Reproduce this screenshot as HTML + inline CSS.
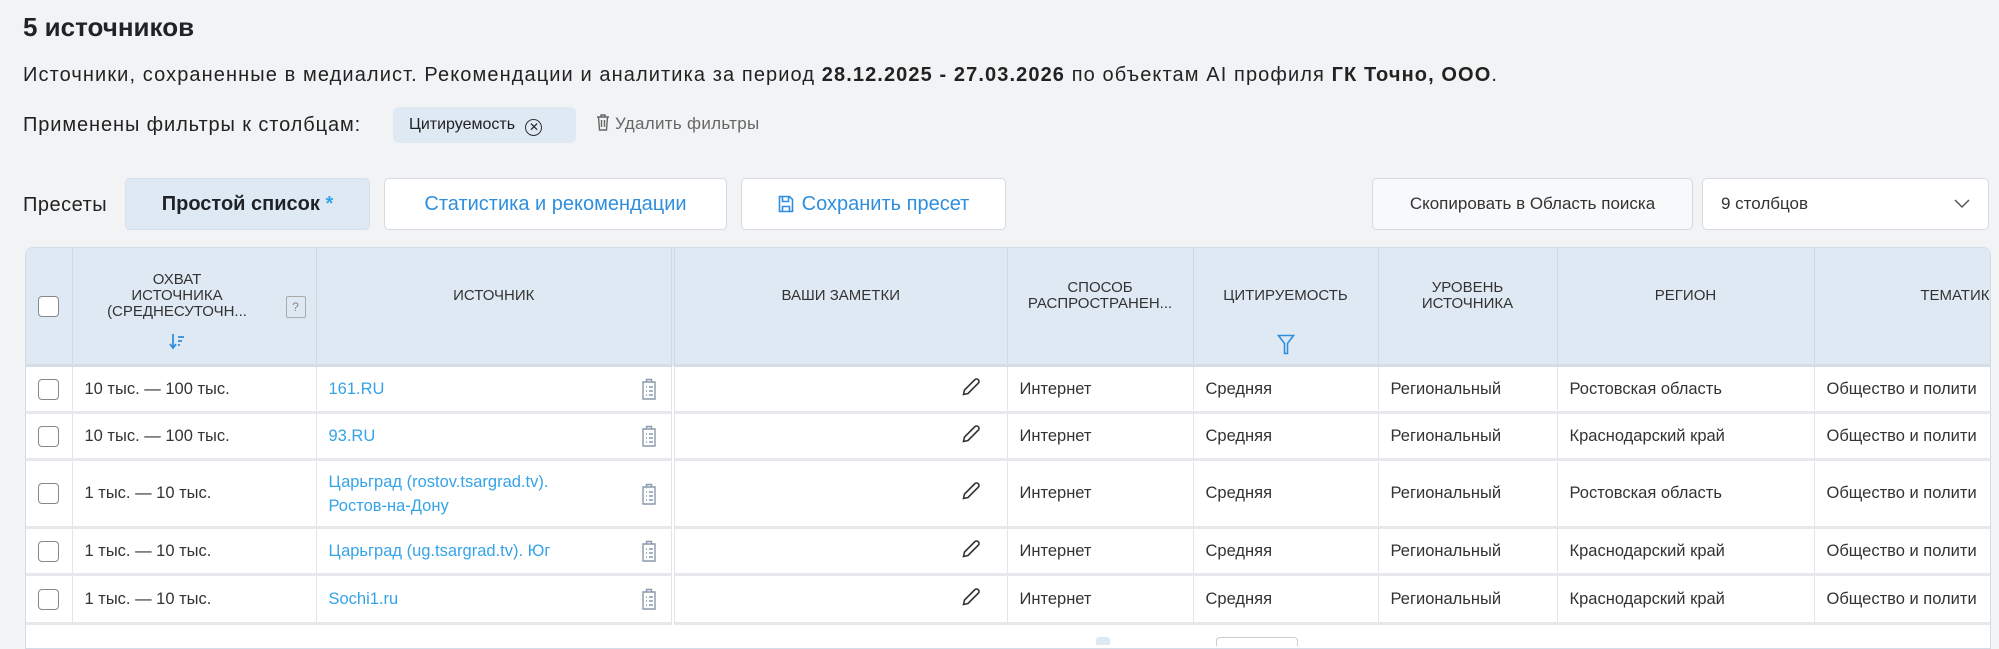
<!DOCTYPE html>
<html><head><meta charset="utf-8"><style>
body{margin:0;width:1999px;height:642px;overflow:hidden;background:#f1f3f5;font-family:"Liberation Sans",sans-serif;color:#222;position:relative}
.a{position:absolute;white-space:nowrap}
h1{position:absolute;left:23px;top:12px;margin:0;font-size:26px;font-weight:bold;color:#1f2328}
.btn{position:absolute;top:178px;height:52px;box-sizing:border-box;border:1px solid #d5dae0;background:#fff;border-radius:5px;display:flex;align-items:center;justify-content:center;font-size:20px;color:#2f8fde}
.tbl{position:absolute;left:25px;top:247px;width:1964px;height:400px;background:#fff;border:1px solid #d3dde8;border-radius:8px 8px 0 0;overflow:hidden}
table{border-collapse:collapse;table-layout:fixed;font-size:16.5px;width:1964px}
th{background:#dfe9f3;font-weight:normal;font-size:15px;color:#333;text-transform:uppercase;line-height:16px;height:116px;vertical-align:top;padding:0 6px;border-right:1px solid #cfd9e4;border-bottom:3px solid #d6dde5}
th .h{height:116px;box-sizing:border-box;padding-top:40px;position:relative}
td{border-right:1px solid #e2e5e9;border-bottom:3px solid #e6e8eb;padding:0 12px;color:#333;white-space:nowrap;overflow:hidden}
td.l{color:#35a3e8;white-space:normal;line-height:24px;position:relative}
.cb{width:19px;height:19px;border:1.5px solid #888;border-radius:4px;background:#fff;margin:auto}
.clip{position:absolute;right:14px;top:50%;margin-top:-11px}
.w{font-size:20px;letter-spacing:1.1px}
td.p{text-align:right;padding-right:26px}
</style></head><body>
<h1>5 источников</h1>
<div class="a w" style="left:23px;top:64px">Источники, сохраненные в медиалист. Рекомендации и аналитика за период <b>28.12.2025 - 27.03.2026</b> по объектам AI профиля <b>ГК Точно, ООО</b>.</div>
<div class="a w" style="left:23px;top:114px;letter-spacing:0.9px">Применены фильтры к столбцам:</div>
<div class="a" style="left:393px;top:107px;width:183px;height:36px;background:#dfe9f3;border-radius:6px;font-size:16px;line-height:36px;padding-left:16px;box-sizing:border-box">Цитируемость <span style="display:inline-block;width:15px;height:15px;border:1.5px solid #333;border-radius:50%;font-size:12px;line-height:15px;text-align:center;vertical-align:-2px;margin-left:6px">✕</span></div>
<div class="a" style="left:596px;top:114px;font-size:17px;color:#666;letter-spacing:0.3px"><svg width="14" height="17" viewBox="0 0 14 17" style="vertical-align:-2px"><path d="M1 3h12M5 3V1h4v2M2.5 3l1 13h7l1-13M5.5 6v7M8.5 6v7" fill="none" stroke="#666" stroke-width="1.4"/></svg> Удалить фильтры</div>
<div class="a w" style="left:23px;top:194px;letter-spacing:0.5px">Пресеты</div>
<div class="btn" style="left:125px;width:245px;background:#dfe9f3;color:#1f2328;font-weight:bold;border-color:#d7e1ec">Простой список&nbsp;<span style="color:#35a3e8">*</span></div>
<div class="btn" style="left:384px;width:343px">Статистика и рекомендации</div>
<div class="btn" style="left:741px;width:265px"><svg width="16" height="18" viewBox="0 0 16 18" style="margin-right:8px"><path d="M1.5 1.5h10l3 3v12h-13z M4.5 1.5v5h6v-5 M4.5 16.5v-5h7v5" fill="none" stroke="#2f8fde" stroke-width="1.6"/></svg>Сохранить пресет</div>
<div class="btn" style="left:1372px;width:321px;font-size:17px;color:#333;background:#f8f9fa">Скопировать в Область поиска</div>
<div class="btn" style="left:1702px;width:287px;font-size:17px;color:#333;justify-content:space-between;padding:0 18px">9 столбцов<svg width="16" height="10"><path d="M1 1l7 7 7-7" fill="none" stroke="#555" stroke-width="1.5"/></svg></div>
<div class="tbl"><table>
<colgroup><col style="width:46px"><col style="width:244px"><col style="width:357px"><col style="width:334px"><col style="width:186px"><col style="width:185px"><col style="width:179px"><col style="width:257px"><col style="width:176px"></colgroup>
<tr><th style="padding:0"><div class="h" style="padding-top:48px"><div class="cb"></div></div></th>
<th style="padding-right:40px"><div class="h" style="padding-top:24px">Охват<br>источника<br>(среднесуточн...<br><svg width="16" height="18" style="margin-top:12px"><path d="M4 2v14M1 12l3 4 3-4M9 5h6M9 9h4M9 13h2" fill="none" stroke="#2f8fde" stroke-width="1.8"/></svg><span style="position:absolute;right:-30px;top:48px;width:18px;height:20px;border:1px solid #aaa;border-radius:2px;font-size:12px;line-height:20px;color:#888">?</span></div></th>
<th style="border-right:4px double #cfd9e4"><div class="h">Источник</div></th><th><div class="h">Ваши заметки</div></th>
<th><div class="h" style="padding-top:32px">Способ<br>распространен...</div></th>
<th><div class="h">Цитируемость<br><svg width="18" height="22" style="margin-top:30px"><path d="M1.5 1.5h15l-6 8v10h-3v-10z" fill="none" stroke="#2f8fde" stroke-width="1.6"/></svg></div></th>
<th><div class="h" style="padding-top:32px">Уровень<br>источника</div></th><th><div class="h">Регион</div></th><th style="text-align:right;padding-right:0"><div class="h">Тематик</div></th></tr>
<tbody>
<tr style="height:47px"><td style="padding:0"><div class="cb"></div></td><td>10 тыс. — 100 тыс.</td><td class="l" style="border-right:4px double #e2e5e9">161.RU<svg class="clip" width="16" height="22"><path d="M2 4h12v17H2zM5.5 4V1.5h5V4M5 9h1M5 13h1M5 17h1M8 9h4M8 13h4M8 17h4" fill="none" stroke="#8a99ab" stroke-width="1.4"/></svg></td><td class="p"><svg width="20" height="20"><path d="M14 2.5a2.5 2.5 0 0 1 3.5 3.5L7 16.5 2.5 17.5 3.5 13z" fill="none" stroke="#333" stroke-width="1.6"/></svg></td><td>Интернет</td><td>Средняя</td><td>Региональный</td><td>Ростовская область</td><td>Общество и полити</td></tr>
<tr style="height:47px"><td style="padding:0"><div class="cb"></div></td><td>10 тыс. — 100 тыс.</td><td class="l" style="border-right:4px double #e2e5e9">93.RU<svg class="clip" width="16" height="22"><path d="M2 4h12v17H2zM5.5 4V1.5h5V4M5 9h1M5 13h1M5 17h1M8 9h4M8 13h4M8 17h4" fill="none" stroke="#8a99ab" stroke-width="1.4"/></svg></td><td class="p"><svg width="20" height="20"><path d="M14 2.5a2.5 2.5 0 0 1 3.5 3.5L7 16.5 2.5 17.5 3.5 13z" fill="none" stroke="#333" stroke-width="1.6"/></svg></td><td>Интернет</td><td>Средняя</td><td>Региональный</td><td>Краснодарский край</td><td>Общество и полити</td></tr>
<tr style="height:68px"><td style="padding:0"><div class="cb"></div></td><td>1 тыс. — 10 тыс.</td><td class="l" style="border-right:4px double #e2e5e9">Царьград (rostov.tsargrad.tv).<br>Ростов-на-Дону<svg class="clip" width="16" height="22"><path d="M2 4h12v17H2zM5.5 4V1.5h5V4M5 9h1M5 13h1M5 17h1M8 9h4M8 13h4M8 17h4" fill="none" stroke="#8a99ab" stroke-width="1.4"/></svg></td><td class="p"><svg width="20" height="20"><path d="M14 2.5a2.5 2.5 0 0 1 3.5 3.5L7 16.5 2.5 17.5 3.5 13z" fill="none" stroke="#333" stroke-width="1.6"/></svg></td><td>Интернет</td><td>Средняя</td><td>Региональный</td><td>Ростовская область</td><td>Общество и полити</td></tr>
<tr style="height:47px"><td style="padding:0"><div class="cb"></div></td><td>1 тыс. — 10 тыс.</td><td class="l" style="border-right:4px double #e2e5e9">Царьград (ug.tsargrad.tv). Юг<svg class="clip" width="16" height="22"><path d="M2 4h12v17H2zM5.5 4V1.5h5V4M5 9h1M5 13h1M5 17h1M8 9h4M8 13h4M8 17h4" fill="none" stroke="#8a99ab" stroke-width="1.4"/></svg></td><td class="p"><svg width="20" height="20"><path d="M14 2.5a2.5 2.5 0 0 1 3.5 3.5L7 16.5 2.5 17.5 3.5 13z" fill="none" stroke="#333" stroke-width="1.6"/></svg></td><td>Интернет</td><td>Средняя</td><td>Региональный</td><td>Краснодарский край</td><td>Общество и полити</td></tr>
<tr style="height:49px"><td style="padding:0"><div class="cb"></div></td><td>1 тыс. — 10 тыс.</td><td class="l" style="border-right:4px double #e2e5e9">Sochi1.ru<svg class="clip" width="16" height="22"><path d="M2 4h12v17H2zM5.5 4V1.5h5V4M5 9h1M5 13h1M5 17h1M8 9h4M8 13h4M8 17h4" fill="none" stroke="#8a99ab" stroke-width="1.4"/></svg></td><td class="p"><svg width="20" height="20"><path d="M14 2.5a2.5 2.5 0 0 1 3.5 3.5L7 16.5 2.5 17.5 3.5 13z" fill="none" stroke="#333" stroke-width="1.6"/></svg></td><td>Интернет</td><td>Средняя</td><td>Региональный</td><td>Краснодарский край</td><td>Общество и полити</td></tr>
</tbody></table>
<div class="a" style="left:1070px;top:389px;width:14px;height:8px;background:#dfe9f3;border-radius:3px 3px 0 0"></div>
<div class="a" style="left:1190px;top:389px;width:80px;height:8px;border:1px solid #ccc;border-bottom:none;border-radius:4px 4px 0 0"></div>
</div>
</body></html>
